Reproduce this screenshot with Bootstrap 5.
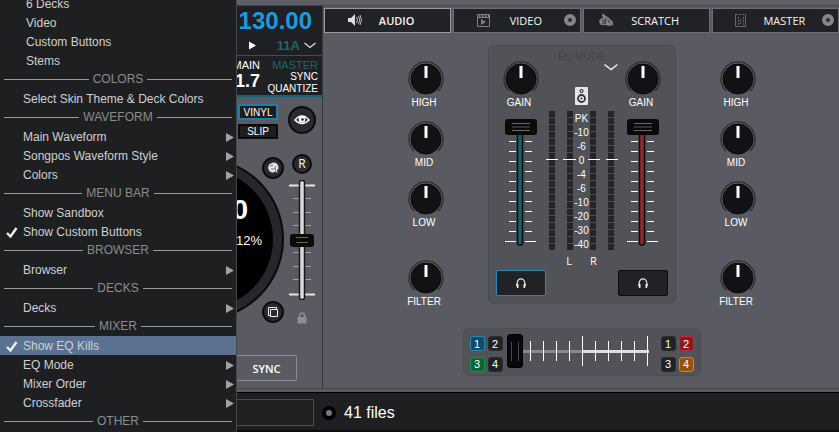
<!DOCTYPE html>
<html lang="en">
<head>
<meta charset="utf-8">
<meta name="viewport" content="width=device-width, initial-scale=1">
<title>DJ Mixer</title>
<link href="https://cdn.jsdelivr.net/npm/bootstrap@5.3.0/dist/css/bootstrap.min.css" rel="stylesheet">
<style>
body{font-family:"Liberation Sans",Arial,sans-serif;font-size:10px;line-height:12px;color:#fff;background:#5a5b62;overflow:hidden}
button{font:inherit;color:inherit;padding:0}
svg{display:block}
.app-top{border-top:5px solid #5d5e68}
/* options menu */
.opt-menu{position:absolute;top:0;left:0;z-index:5;width:237px;height:100vh;overflow:hidden;background:#1e1f21;border-right:1px solid #46474c;font-size:12px;color:#d0d0d0}
.opt-list{margin-top:-6px}
.opt-item{height:19px;width:100%;border:0;background:none;padding:1px 2px 0 6px;text-align:left;line-height:19px}
.opt-item svg{flex:none}
.opt-tick{width:17px;flex:none}
.opt-tick.wide{width:20px}
.opt-item.picked{background:#5a7290}
.opt-head{height:19px;line-height:19px;color:#8c8c8c;margin:0 4px;gap:4px}
.opt-head::before,.opt-head::after{content:"";flex:1;height:1px;background:#9a9a9a}
/* deck */
.deck{width:323px;flex:none;border-right:1px solid #35363a;overflow:hidden}
.screen{background:#1f2024;border-top:1px solid #424348;border-bottom:2px solid #136578}
.bpm{font-size:24px;line-height:30px;font-weight:700;color:#1a9bdd;padding-right:10px}
.key-row{height:20px;font-size:13px;font-weight:700;color:#23646b;border-bottom:1px solid #4a4b50;padding-right:6px}
.info{padding:3px 4px 0 0;height:39px}
.info-big{font-size:18px;line-height:20px;font-weight:700}
.info-lab{font-size:11px}
.info-side{width:58px}
.teal{color:#23646b}
.deck-body{padding:7px 6px 0 0;gap:4px}
.platter{position:absolute;left:122px;top:54px;z-index:0}
.deck-left{z-index:1}
.small-btn{width:40px;height:16px;margin-right:6px;background:#1d1e21;border:2px solid #0b0b0d;line-height:11px}
.small-btn.on{border-color:#1b7fae}
.slip-btn{height:15px;margin-top:4px;margin-bottom:18px}
.round-btn{width:22px;height:22px;border-radius:50%;background:#2a2b2f;border:2px solid #0c0c0e}
.copy-btn{margin-top:52px}
.eye-btn{width:28px;height:28px;margin-top:2px}
.r-btn{width:20px;height:20px;margin:20px 0 6px;font-family:"Open Sans",sans-serif;font-size:12px;line-height:14px}
.time-big{font-size:28px;line-height:30px;font-weight:700;padding-right:36px;margin-top:16px}
.pct{font-size:13px;line-height:16px;padding-right:22px;margin-top:8px}
.lock{margin-top:12px}
.sync-btn{width:61px;height:26px;border:1px solid #8c8d92;border-radius:2px;background:none;margin:31px 25px 0 0;font:600 11px "Open Sans",sans-serif}
/* faders */
.fader{position:relative}
.fader input{position:absolute;top:0;left:0;width:100%;height:100%;margin:0;appearance:none;background:none}
.fader.up input{writing-mode:vertical-lr;direction:rtl}
.fader input::-webkit-slider-runnable-track{background:none}
.pitch{width:28px;height:120px}
.pitch input::-webkit-slider-thumb{appearance:none;width:24px;height:13px;border-radius:3px;border:0;background:linear-gradient(90deg,#0b0b0c 6px,transparent 6px,transparent 18px,#0b0b0c 18px),linear-gradient(#0b0b0c 3px,#67686c 3px,#67686c 4px,#0b0b0c 4px,#0b0b0c 8px,#67686c 8px,#67686c 9px,#0b0b0c 9px)}
.level{width:50px;height:130px}
.level input{top:2px;height:128px}
.level input::-webkit-slider-thumb{appearance:none;width:32px;height:16px;border-radius:3px;border:0;background:linear-gradient(90deg,#0a0a0b 7px,transparent 7px,transparent 25px,#0a0a0b 25px),linear-gradient(#0a0a0b 4px,#6a6a6c 4px,#6a6a6c 5px,#0a0a0b 5px,#0a0a0b 7px,#333 7px,#333 9px,#0a0a0b 9px,#0a0a0b 11px,#6a6a6c 11px,#6a6a6c 12px,#0a0a0b 12px)}
.cross{width:150px;height:34px}
.cross input::-webkit-slider-thumb{appearance:none;width:16px;height:34px;border-radius:3px;border:1px solid #000;background:linear-gradient(#08080a 7px,transparent 7px,transparent 26px,#08080a 26px),linear-gradient(90deg,#08080a 3px,#4a4a4c 3px,#4a4a4c 4px,#08080a 4px,#08080a 10px,#4a4a4c 10px,#4a4a4c 11px,#08080a 11px)}
/* mixer */
.mixer{border-top:1px solid #45464b;min-width:0}
.tabs{padding:2px 0 0 1px;gap:2px}
.tab-btn{flex:1 1 0;min-width:0;height:25px;background:#212226;border:1px solid #6d6e72;font:11px "Open Sans",sans-serif;color:#f4f4f4;position:relative}
.tab-btn.on{border-color:#9a9a9e;font-weight:600}
.tab-ico{position:absolute;top:3px;left:22px}
.tab-ico.near{left:14px}
.tab-dot{position:absolute;right:4px;top:5px;width:12px;height:12px;border-radius:50%;border:4px solid #85868a;background:#2a2b2f}
.tab-btn span{padding-left:18px}
.knob-col{width:60px;padding-top:16px;gap:12px}
.knob-last{margin-top:19px}
.knob{display:flex;flex-direction:column;align-items:center;width:60px}
.knob label{margin-right:3px}
.knob input{appearance:none;width:36px;height:36px;margin:0;background:url("data:image/svg+xml,%3Csvg xmlns='http://www.w3.org/2000/svg' width='36' height='36'%3E%3Ccircle cx='18' cy='18' r='15' fill='%23101214' stroke='%2308090a'/%3E%3Cpath d='M6 30A17 17 0 1 1 30 30' fill='none' stroke='%232c2d30' stroke-width='1.3'/%3E%3Cpath d='M16.500 5h3v12h-3z' fill='%23fff'/%3E%3C/svg%3E")}
.knob input::-webkit-slider-thumb{appearance:none;width:1px;height:1px;background:none;border:0}
.knob input::-webkit-slider-runnable-track{background:none}
.mixer-body{gap:32px;padding:12px 0 0 1px}
.panel-box{background:#525358;border:1px solid #4c4d52;border-radius:6px}
.center-box{width:188px;padding:15px 7px 7px;align-self:flex-start}
.chan{width:50px;align-items:center}
.cue-btn{width:50px;height:26px;border:1px solid #0b0b0d;border-radius:2px;background:#212226;margin-top:23px}
.cue-btn.on{border-color:#2288b8}
.meters{width:72px}
.eq-mode{color:#44454a;font-size:10px;margin-top:-10px}
.meter{width:6px;height:139px;background:repeating-linear-gradient(#252529 0 6px,#4a4b50 6px 7px)}
.meter-pair{gap:12px}
.meter-wrap{padding:0 3px;position:relative;margin-top:6px}
.zero{position:absolute;left:0;right:0;top:48px;height:1px;background:linear-gradient(90deg,#fff 12px,transparent 12px 17px,#fff 17px 30px,transparent 30px 42px,#fff 42px 54px,transparent 54px 60px,#fff 60px)}
.scale{padding-top:1px}
.scale div{height:14px;line-height:14px}
.lr{font:11px/14px "Open Sans",sans-serif;gap:18px;margin-top:2px}
.cross-box{height:48px;padding:5px 6px 0;margin:20px 0 11px 1px;align-self:center}
.deck-pick{display:grid;grid-template-columns:15px 15px;gap:2px 3px;margin-top:2px}
.deck-pick button{height:15px;border:1px solid #2b2c30;border-radius:3px;background:#212226;font-size:11px;line-height:12px}
.deck-pick .c1{background:#154a63;border-color:#208ac0}
.deck-pick .c2{background:#8a1a20;border-color:#c02a36}
.deck-pick .c3{background:#0c6335;border-color:#178f4e}
.deck-pick .c4{background:#96530f;border-color:#d0842a}
/* browser bar */
.browser-bar{height:44px;flex:none;border-top:1px solid #45464b;background:#1d1f21;box-shadow:inset 0 3px #5a5b62,inset 0 4px #000,inset 0 -2px #0c0c0d}
.search-box{width:314px;height:27px;margin-top:4px;border:1px solid #4c4d50;background:#1f2022;color:#fff}
.dot-btn{width:14px;height:14px;border-radius:50%;border:4px solid #000;background:#77787a;margin:4px 8px 0}
.file-count{font-size:16px;line-height:20px;margin-top:4px}
</style>
<script src="https://cdn.jsdelivr.net/npm/bootstrap@5.3.0/dist/js/bootstrap.bundle.min.js"></script>
</head>
<body>
<svg class="d-none" aria-hidden="true">
  <symbol id="arrow" viewBox="0 0 8 9"><path d="M0 0 8 4.500 0 9z" fill="#a0a1a3"/></symbol>
  <symbol id="tick" viewBox="0 0 12 11"><path d="M1 6 4.500 9.500 10.500 1" fill="none" stroke="#ededed" stroke-width="2.400"/></symbol>
  <symbol id="phones" viewBox="0 0 12 11"><path d="M2.200 8V5a3.800 4.200 0 0 1 7.600 0v3" fill="none" stroke="#e8e8e8" stroke-width="1.200"/><path d="M1 6h2.500v4H2zM11 6H8.500v4H10z" fill="#e8e8e8"/></symbol>
  <symbol id="ticks" viewBox="0 0 50 130">
    <path d="M13 24.500h23M13 34.500h23M13 44.500h23M13 54.500h23M13 64.500h23M13 74.500h23M13 84.500h23M13 94.500h23M13 104.500h23M13 114.500h23M9 124.500h31" stroke="#fff"/>
    <path d="M20 10h9v117H20z" fill="#525358"/>
  </symbol>
</svg>
<nav class="opt-menu" aria-label="Options">
  <div class="opt-list">
    <button class="opt-item d-flex align-items-center"><span class="opt-tick wide"></span>6 Decks</button>
    <button class="opt-item d-flex align-items-center"><span class="opt-tick wide"></span>Video</button>
    <button class="opt-item d-flex align-items-center"><span class="opt-tick wide"></span>Custom Buttons</button>
    <button class="opt-item d-flex align-items-center"><span class="opt-tick wide"></span>Stems</button>
    <div class="opt-head d-flex align-items-center">COLORS</div>
    <button class="opt-item d-flex align-items-center"><span class="opt-tick"></span>Select Skin Theme &amp; Deck Colors</button>
    <div class="opt-head d-flex align-items-center">WAVEFORM</div>
    <button class="opt-item d-flex align-items-center"><span class="opt-tick"></span>Main Waveform<svg class="ms-auto" width="8" height="9"><use href="#arrow"/></svg></button>
    <button class="opt-item d-flex align-items-center"><span class="opt-tick"></span>Songpos Waveform Style<svg class="ms-auto" width="8" height="9"><use href="#arrow"/></svg></button>
    <button class="opt-item d-flex align-items-center"><span class="opt-tick"></span>Colors<svg class="ms-auto" width="8" height="9"><use href="#arrow"/></svg></button>
    <div class="opt-head d-flex align-items-center">MENU BAR</div>
    <button class="opt-item d-flex align-items-center"><span class="opt-tick"></span>Show Sandbox</button>
    <button class="opt-item d-flex align-items-center"><span class="opt-tick"><svg width="12" height="11"><use href="#tick"/></svg></span>Show Custom Buttons</button>
    <div class="opt-head d-flex align-items-center">BROWSER</div>
    <button class="opt-item d-flex align-items-center"><span class="opt-tick"></span>Browser<svg class="ms-auto" width="8" height="9"><use href="#arrow"/></svg></button>
    <div class="opt-head d-flex align-items-center">DECKS</div>
    <button class="opt-item d-flex align-items-center"><span class="opt-tick"></span>Decks<svg class="ms-auto" width="8" height="9"><use href="#arrow"/></svg></button>
    <div class="opt-head d-flex align-items-center">MIXER</div>
    <button class="opt-item picked d-flex align-items-center"><span class="opt-tick"><svg width="12" height="11"><use href="#tick"/></svg></span>Show EQ Kills</button>
    <button class="opt-item d-flex align-items-center"><span class="opt-tick"></span>EQ Mode<svg class="ms-auto" width="8" height="9"><use href="#arrow"/></svg></button>
    <button class="opt-item d-flex align-items-center"><span class="opt-tick"></span>Mixer Order<svg class="ms-auto" width="8" height="9"><use href="#arrow"/></svg></button>
    <button class="opt-item d-flex align-items-center"><span class="opt-tick"></span>Crossfader<svg class="ms-auto" width="8" height="9"><use href="#arrow"/></svg></button>
    <div class="opt-head d-flex align-items-center">OTHER</div>
  </div>
</nav>
<div class="d-flex flex-column min-vh-100">
  <main class="app-top d-flex flex-grow-1">
    <section class="deck" aria-label="Deck">
      <div class="screen text-end">
        <div class="bpm">130.00</div>
        <div class="key-row d-flex justify-content-end align-items-center">
          <svg class="me-3" width="9" height="9" viewBox="0 0 9 9"><path d="M1 .500 8 4.500 1 8.500z" fill="#fff"/></svg>
          <span class="ms-1 me-1">11A</span>
          <svg width="12" height="7" viewBox="0 0 12 7"><path d="M.500 1 6 5.500 11.500 1" fill="none" stroke="#ddd" stroke-width="1.300"/></svg>
        </div>
        <div class="info d-flex justify-content-between">
          <div class="flex-grow-1"><div class="info-lab">MAIN</div><div class="info-big">1.7</div></div>
          <div class="info-side"><div class="info-lab teal">MASTER</div><div>SYNC</div><div>QUANTIZE</div></div>
        </div>
      </div>
      <div class="deck-body d-flex justify-content-end position-relative">
        <svg class="platter" width="162" height="176" viewBox="0 0 162 176"><circle cx="81" cy="88" r="80" fill="#26272b" stroke="#0a0a0c" stroke-width="2"/><circle cx="81" cy="88" r="70" fill="#000"/></svg>
        <div class="deck-left d-flex flex-column align-items-end">
          <button class="small-btn on">VINYL</button>
          <button class="small-btn slip-btn">SLIP</button>
          <button class="round-btn" aria-label="Slicer"><svg width="18" height="18" viewBox="0 0 18 18"><path d="M9 3.500 12 4l2.300 2.500.2 3-1.500 2 .5 2.500-2-1.500-3 1.200-3-1.400L4 9l1-3.500z" fill="#e4e4e4"/><path d="M7 10h3l2-3M11 9l1 3M6 7l3-1" stroke="#777" fill="none"/></svg></button>
          <div class="time-big">0</div>
          <div class="pct">12%</div>
          <button class="round-btn copy-btn" aria-label="Clone deck"><svg width="18" height="18" viewBox="0 0 18 18"><path d="M4.500 12.500v-8h8v2M4.500 12.500h2M6.500 6.500h7v7h-7z" fill="none" stroke="#eee"/></svg></button>
        </div>
        <div class="d-flex flex-column align-items-center">
          <button class="round-btn eye-btn" aria-label="View"><svg width="24" height="24" viewBox="0 0 24 24"><path d="M5 12q7-8 14 0-7 7-14 0z" fill="none" stroke="#fff" stroke-width="1.500"/><circle cx="12" cy="11.500" r="3.300" fill="#fff"/><circle cx="12.500" cy="11.500" r="1.300" fill="#222"/></svg></button>
          <button class="round-btn r-btn">R</button>
          <div class="fader up pitch">
            <svg width="28" height="120"><path d="M1 5.500h26M1 114.500h26" stroke="#e4e4e4" stroke-width="2"/><path d="M5 18.500h18M5 32.500h18M5 45.500h18M5 72.500h18M5 86.500h18M5 99.500h18" stroke="#a4a5a9"/><rect x="11.500" y=".500" width="5" height="119" rx="2" fill="#dadbdd" stroke="#17181a" stroke-width="1.500"/></svg>
            <input type="range" aria-label="Pitch" value="50">
          </div>
          <svg class="lock" width="10" height="12" viewBox="0 0 10 12"><path d="M2.500 6V3.500a2.500 2.500 0 0 1 5 0V6" fill="none" stroke="#8c8d90" stroke-width="1.500"/><path d="M.500 5h9v6.500h-9z" fill="#8c8d90"/></svg>
        </div>
      </div>
      <div class="text-end"><button class="sync-btn">SYNC</button></div>
    </section>
    <section class="mixer flex-grow-1 d-flex flex-column" aria-label="Mixer">
      <div class="tabs d-flex" role="tablist">
        <button class="tab-btn on" role="tab"><svg class="tab-ico" width="16" height="16" viewBox="0 0 16 16"><path d="M1 6h3l4-4v12l-4-4H1z" fill="#ddd"/><path d="M9.500 5q2 3 0 6M11.500 4q2.500 4 0 8M13 3q3 5 0 10" fill="none" stroke="#ccc" stroke-width=".900"/></svg><span>AUDIO</span></button>
        <button class="tab-btn" role="tab"><svg class="tab-ico" width="16" height="16" viewBox="0 0 16 16"><path d="M1.500 2.500h12v12h-12zM1.500 5.500h12" fill="none" stroke="#808184"/><path d="M3 4h10" stroke="#808184" stroke-width="2" stroke-dasharray="1.500 1.500"/><path d="M5 7l5 3-5 3z" fill="#808184"/></svg><span>VIDEO</span><i class="tab-dot"></i></button>
        <button class="tab-btn" role="tab"><svg class="tab-ico near" width="16" height="16" viewBox="0 0 16 16"><path d="M1 2l1.500 1M5 1.500 8 4l3 2 4 4v3l-4 1-3-1-5 0-2-3 1-3 3-1-1-3z" fill="#808184"/><path d="M4 8l3 1M8 6l-1 6M10 8l2 3M4 11l3 0" stroke="#303135"/></svg><span>SCRATCH</span></button>
        <button class="tab-btn" role="tab"><svg class="tab-ico" width="14" height="16" viewBox="0 0 14 16"><path d="M.500 2v12.500h10V2" fill="none" stroke="#66676b"/><path d="M1 2.500h10M3.500 5v8M5.500 7v6M8.500 5v8" stroke="#66676b" stroke-dasharray="2 1"/></svg><span>MASTER</span><i class="tab-dot"></i></button>
      </div>
      <div class="mixer-body d-flex justify-content-center">
        <div class="knob-col d-flex flex-column">
          <div class="knob"><input type="range" id="h1"><label for="h1">HIGH</label></div>
          <div class="knob"><input type="range" id="m1"><label for="m1">MID</label></div>
          <div class="knob"><input type="range" id="l1"><label for="l1">LOW</label></div>
          <div class="knob knob-last"><input type="range" id="f1"><label for="f1">FILTER</label></div>
        </div>
        <div class="panel-box center-box d-flex">
          <div class="chan d-flex flex-column">
            <div class="knob"><input type="range" id="g1"><label for="g1">GAIN</label></div>
            <div class="fader up level mt-2"><svg width="50" height="130"><use href="#ticks"/><rect x="21.500" y="8" width="5" height="120" rx="2" fill="#17606e" stroke="#0d0d0f" stroke-width="1.500"/></svg><input type="range" value="100" aria-label="Left volume"></div>
            <button class="cue-btn on d-flex align-items-center justify-content-center" aria-label="Cue left"><svg width="12" height="11"><use href="#phones"/></svg></button>
          </div>
          <div class="meters d-flex flex-column align-items-center">
            <div class="eq-mode">EQ MODE</div>
            <svg class="align-self-end" width="14" height="8" viewBox="0 0 14 8"><path d="M.500 1.500 7 6.500 13.500 1.500" fill="none" stroke="#eee" stroke-width="1.400"/></svg>
            <svg class="mt-3" width="13" height="18" viewBox="0 0 13 18"><rect width="13" height="18" rx="1" fill="#e6e6e6"/><circle cx="6.500" cy="4" r="1.500" fill="none" stroke="#333" stroke-width="1.200"/><circle cx="6.500" cy="11.500" r="3.500" fill="none" stroke="#333" stroke-width="1.800"/><circle cx="6.500" cy="11.500" r="1" fill="#333"/></svg>
            <div class="meter-wrap d-flex justify-content-between w-100">
              <i class="zero"></i>
              <div class="meter-pair d-flex"><div class="meter"></div><div class="meter"></div></div>
              <div class="scale text-center text-nowrap"><div>PK</div><div>-10</div><div>-6</div><div>0</div><div>-4</div><div>-6</div><div>-10</div><div>-20</div><div>-30</div><div>-40</div></div>
              <div class="meter-pair d-flex"><div class="meter"></div><div class="meter"></div></div>
            </div>
            <div class="lr d-flex"><span>L</span><span>R</span></div>
          </div>
          <div class="chan d-flex flex-column">
            <div class="knob"><input type="range" id="g2"><label for="g2">GAIN</label></div>
            <div class="fader up level mt-2"><svg width="50" height="130"><use href="#ticks"/><rect x="21.500" y="8" width="5" height="120" rx="2" fill="#8a2d33" stroke="#0d0d0f" stroke-width="1.500"/></svg><input type="range" value="100" aria-label="Right volume"></div>
            <button class="cue-btn d-flex align-items-center justify-content-center" aria-label="Cue right"><svg width="12" height="11"><use href="#phones"/></svg></button>
          </div>
        </div>
        <div class="knob-col d-flex flex-column">
          <div class="knob"><input type="range" id="h2"><label for="h2">HIGH</label></div>
          <div class="knob"><input type="range" id="m2"><label for="m2">MID</label></div>
          <div class="knob"><input type="range" id="l2"><label for="l2">LOW</label></div>
          <div class="knob knob-last"><input type="range" id="f2"><label for="f2">FILTER</label></div>
        </div>
      </div>
      <div class="panel-box cross-box d-flex">
        <div class="deck-pick"><button class="c1">1</button><button>2</button><button class="c3">3</button><button>4</button></div>
        <div class="fader cross ms-1 me-1">
          <svg width="150" height="34"><path d="M8 17.500h67" stroke="#88898b" stroke-width="3"/><path d="M75 17.500h67" stroke="#dedede" stroke-width="3"/><path d="M23.500 7v20M36.500 7v20M49.500 7v20M62.500 7v20M75.500 2v30M88.500 7v20M101.500 7v20M114.500 7v20M127.500 7v20M140.500 2v30" stroke="#fff"/></svg>
          <input type="range" value="0" aria-label="Crossfader">
        </div>
        <div class="deck-pick"><button>1</button><button class="c2">2</button><button>3</button><button class="c4">4</button></div>
      </div>
    </section>
  </main>
  <footer class="browser-bar d-flex align-items-center">
    <input class="search-box" type="text" aria-label="Search files">
    <button class="dot-btn" aria-label="Record"></button>
    <div class="file-count">41 files</div>
  </footer>
</div>
</body>
</html>
